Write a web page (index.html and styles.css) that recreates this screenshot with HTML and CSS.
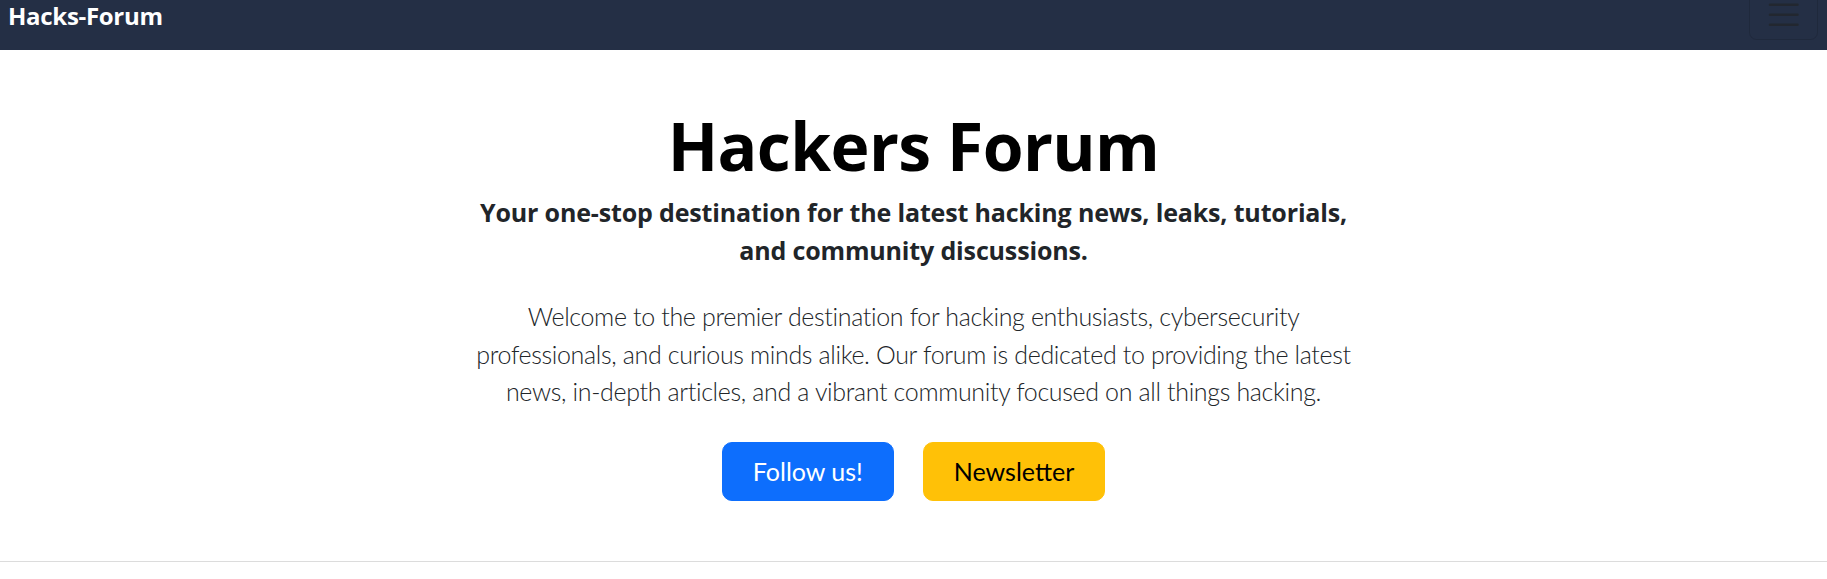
FILE: index.html
```html
<!DOCTYPE html>
<html lang="en">
<head>
<meta charset="utf-8">
<title>Hacks-Forum</title>
<link rel="stylesheet" href="styles.css">
</head>
<body>
<nav class="navbar">
  <div class="navbar-inner">
    <a class="brand" href="#">Hacks-Forum</a>
    <button class="toggler" type="button" aria-label="Toggle navigation">
      <svg class="toggler-icon" viewBox="0 0 30 30" width="37.5" height="37.5" aria-hidden="true">
        <path d="M4 7h22M4 15h22M4 23h22" stroke="rgba(33,37,41,0.75)" stroke-width="2" stroke-linecap="round" fill="none"/>
      </svg>
    </button>
  </div>
</nav>
<section class="hero">
  <h1 class="hero-title">Hackers Forum</h1>
  <div class="hero-body">
    <p class="hero-sub">Your one-stop destination for the latest hacking news, leaks, tutorials, and community discussions.</p>
    <p class="hero-lead">Welcome to the premier destination for hacking enthusiasts, cybersecurity professionals, and curious minds alike. Our forum is dedicated to providing the latest news, in-depth articles, and a vibrant community focused on all things hacking.</p>
    <div class="hero-actions">
      <button class="btn btn-primary" type="button">Follow us!</button>
      <button class="btn btn-warning" type="button">Newsletter</button>
    </div>
  </div>
</section>
<hr class="divider">
</body>
</html>
```

FILE: styles.css
```css
* { box-sizing: border-box; }

html, body {
  margin: 0;
  padding: 0;
  background: #fff;
}

body {
  font-family: Lato, "Open Sans", "Liberation Sans", sans-serif;
  color: #212529;
}

.navbar {
  height: 50px;
  background: #242f45;
  overflow: hidden;
}

.navbar-inner {
  display: flex;
  align-items: flex-start;
  justify-content: space-between;
  padding: 0 9px 0 8px;
}

.brand {
  font-family: "Open Sans", Lato, sans-serif;
  font-size: 24px;
  line-height: 31px;
  font-weight: 700;
  letter-spacing: -0.3px;
  color: #fff;
  text-decoration: none;
}

.toggler {
  display: flex;
  align-items: center;
  justify-content: center;
  width: 69px;
  height: 50px;
  margin-top: -10px;
  padding: 0;
  background: transparent;
  border: 1.25px solid rgba(0, 0, 0, 0.12);
  border-radius: 7.5px;
}

.toggler-icon {
  display: block;
}

.hero {
  padding-top: 52.5px;
  text-align: center;
}

.hero-title {
  margin: 0;
  font-family: "Open Sans", Lato, sans-serif;
  font-size: 66px;
  line-height: 84px;
  font-weight: 700;
  letter-spacing: -0.6px;
  color: #000;
}

.hero-body {
  width: 890px;
  margin: 0 auto;
}

.hero-sub {
  margin: 7.5px 0 0;
  font-family: "Open Sans", Lato, sans-serif;
  font-size: 25px;
  line-height: 37.5px;
  font-weight: 700;
  letter-spacing: -0.15px;
  color: #212529;
}

.hero-lead {
  margin: 29px 0 0;
  font-size: 25px;
  line-height: 37.5px;
  font-weight: 300;
  letter-spacing: -0.35px;
  color: #212529;
}

.hero-actions {
  display: flex;
  justify-content: center;
  gap: 29px;
  margin-top: 31px;
}

.btn {
  font-family: inherit;
  font-size: 25px;
  line-height: 37.5px;
  font-weight: 400;
  padding: 10px 30px;
  border: 1px solid transparent;
  border-radius: 10px;
  cursor: pointer;
}

.btn-primary {
  background: #0d6efd;
  border-color: #0d6efd;
  color: #fff;
}

.btn-warning {
  background: #ffc107;
  border-color: #ffc107;
  color: #000;
}

.divider {
  margin: 60px 0 0;
  border: 0;
  border-top: 1px solid #dcdcdc;
}
```
